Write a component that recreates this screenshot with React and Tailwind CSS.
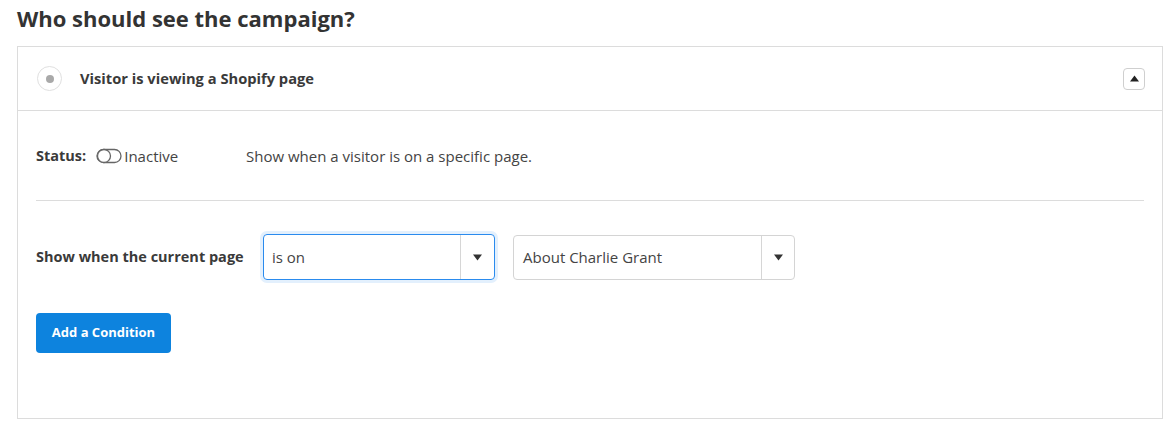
import React from "react";

function Caret({ up = false }) {
  return (
    <svg width="9" height="7" viewBox="0 0 9 7" className="block">
      {up ? (
        <polygon points="4.5,0.5 9,6.5 0,6.5" fill="#222" />
      ) : (
        <polygon points="0,0.5 9,0.5 4.5,6.5" fill="#333" />
      )}
    </svg>
  );
}

function Toggle() {
  return (
    <svg width="26" height="16" viewBox="0 0 26 16" className="block">
      <rect x="1" y="1.5" width="24" height="13" rx="6.5" fill="none" stroke="#666" strokeWidth="1.3" />
      <circle cx="8" cy="8" r="6.5" fill="#fff" stroke="#666" strokeWidth="1.3" />
    </svg>
  );
}

export default function App() {
  return (
    <div
      className="bg-white w-[1174px] h-[423px] pl-[17px] pr-[11px] text-[#3a3a3a]"
      style={{ fontFamily: "'Open Sans', Arial, sans-serif" }}
    >
      <h1 className="text-[22px] leading-[30px] font-bold text-[#333] pt-[3px] pb-[13px]">
        Who should see the campaign?
      </h1>
      <div className="border border-[#dcdcdc] h-[373px]">
        <div className="h-[64px] flex items-center pl-[19px] pr-[17px] border-b border-[#dcdcdc]">
          <div className="w-[25px] h-[25px] rounded-full border border-[#e0e0e0] flex items-center justify-center">
            <div className="w-[8px] h-[8px] rounded-full bg-[#a9a9a9]" />
          </div>
          <div className="ml-[18px] text-[14.7px] font-bold text-[#3a3a3a]">
            Visitor is viewing a Shopify page
          </div>
          <div className="ml-auto w-[22px] h-[22px] rounded-[4px] border border-[#cfcfcf] flex items-center justify-center">
            <Caret up />
          </div>
        </div>
        <div className="px-[18px]">
          <div className="h-[90px] flex items-center border-b border-[#dcdcdc] pt-[1px]">
            <div className="w-[210px] flex items-center">
              <span className="font-bold text-[14.5px] text-[#3a3a3a]">Status:</span>
              <span className="ml-[10px]">
                <Toggle />
              </span>
              <span className="ml-[2px] text-[15px] text-[#444]">Inactive</span>
            </div>
            <span className="text-[15px] text-[#444]">Show when a visitor is on a specific page.</span>
          </div>
          <div className="flex items-center pt-[33px]">
            <div className="w-[227px] text-[14.5px] font-bold text-[#3a3a3a]">Show when the current page</div>
            <div className="w-[232px] h-[46px] rounded-[4px] border border-[#2a8bee] shadow-[0_0_0_3px_#e3f0fd] flex items-stretch">
              <div className="flex-1 flex items-center pl-[8px] text-[15px] text-[#444]">is on</div>
              <div className="w-[34px] border-l border-[#d6d6d6] flex items-center justify-center">
                <Caret />
              </div>
            </div>
            <div className="ml-[18px] w-[282px] h-[45px] rounded-[4px] border border-[#d4d4d4] flex items-stretch">
              <div className="flex-1 flex items-center pl-[9px] text-[15px] text-[#444]">About Charlie Grant</div>
              <div className="w-[33px] border-l border-[#d6d6d6] flex items-center justify-center">
                <Caret />
              </div>
            </div>
          </div>
          <button className="mt-[33px] w-[135px] h-[40px] rounded-[4px] bg-[#0d83de] text-white text-[13px] font-bold">
            Add a Condition
          </button>
        </div>
      </div>
    </div>
  );
}
